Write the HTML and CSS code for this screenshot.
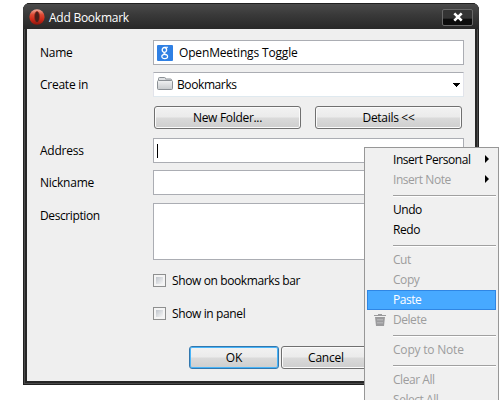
FILE: index.html
```html
<!DOCTYPE html>
<html lang="en">
<head>
<meta charset="utf-8">
<title>Add Bookmark</title>
<link rel="stylesheet" href="styles.css">
</head>
<body>
<main class="dialog">
  <header class="titlebar">
    <svg class="app-icon" width="16" height="16" viewBox="0 0 16 16">
      <defs>
        <linearGradient id="red" x1="0" y1="0" x2="0" y2="1"><stop offset="0" stop-color="#efb0a0"/><stop offset=".35" stop-color="#dc4a34"/><stop offset=".65" stop-color="#d02a1a"/><stop offset="1" stop-color="#8d150c"/></linearGradient>
      </defs>
      <ellipse cx="8" cy="8" rx="7.6" ry="7.8" fill="url(#red)"/>
      <ellipse cx="8" cy="8" rx="2.5" ry="5.6" fill="#47201b" stroke="#a02a1c" stroke-width=".7"/>
    </svg>
    <h1 class="title">Add Bookmark</h1>
    <button class="close" aria-label="Close">
      <svg width="12" height="10" viewBox="0 0 12 10"><path d="M2.3 1.3 9.7 8.7M9.7 1.3 2.3 8.7" stroke="#fff" stroke-width="2.6"/></svg>
    </button>
  </header>
  <form class="form">
    <div class="row"><label class="label">Name</label>
      <div class="field">
        <svg class="site-icon" width="16" height="16" viewBox="0 0 16 16"><rect width="16" height="16" rx="1" fill="#2f80e4"/><g fill="none" stroke="#fff"><ellipse cx="7.4" cy="4.9" rx="2.2" ry="2.4" stroke-width="1.3"/><path d="M7.8 2.2h3.2M7.4 7.4c-1.6 1 .6 1.4 1.8 2.4" stroke-width="1.1"/><ellipse cx="7.7" cy="11.5" rx="2.9" ry="2.1" stroke-width="1.2"/></g></svg>
        <span class="site-name">OpenMeetings Toggle</span>
      </div>
    </div>
    <div class="row"><label class="label">Create in</label>
      <div class="field combo">
        <svg class="folder" width="16" height="14" viewBox="0 0 16 14"><defs><linearGradient id="fold" x1="0" y1="0" x2="0" y2="1"><stop offset="0" stop-color="#f0f1f2"/><stop offset="1" stop-color="#c7cacd"/></linearGradient></defs><path d="M1.5 3V1.5q0-1 1-1h5q1 0 1 1V2h5q1 0 1 1v1" fill="#dfe1e3" stroke="#8b9095"/><rect x=".5" y="3.5" width="15" height="9" rx="1" fill="url(#fold)" stroke="#8b9095"/></svg>
        <span class="combo-text">Bookmarks</span>
        <svg class="arrow" width="7" height="4" viewBox="0 0 7 4" shape-rendering="crispEdges"><path d="M0 0h7v1H6v1H5v1H4v1H3V3H2V2H1V1H0z"/></svg>
      </div>
    </div>
    <div class="actions">
      <button class="btn wide" type="button">New Folder...</button>
      <button class="btn wide" type="button">Details &lt;&lt;</button>
    </div>
    <div class="row"><label class="label">Address</label><div class="field"><span class="caret"></span></div></div>
    <div class="row"><label class="label">Nickname</label><div class="field"></div></div>
    <div class="row tall"><label class="label tight">Description</label><div class="field area"></div></div>
    <div class="checks">
      <label class="check"><i class="box"></i><span>Show on bookmarks bar</span></label>
      <label class="check"><i class="box"></i><span>Show in panel</span></label>
    </div>
    <div class="footer">
      <button class="btn default" type="button">OK</button>
      <button class="btn cancel" type="button">Cancel</button>
    </div>
  </form>
</main>
<nav class="menu">
  <div class="item">Insert Personal<i class="sub"></i></div>
  <div class="item off">Insert Note<i class="sub"></i></div>
  <hr class="sep">
  <div class="item">Undo</div>
  <div class="item">Redo</div>
  <hr class="sep">
  <div class="item off">Cut</div>
  <div class="item off">Copy</div>
  <div class="item active">Paste</div>
  <div class="item off"><svg class="trash" width="12" height="12" viewBox="0 0 12 12"><path d="M0 1h4V0h4v1h4v1H0zM1 3h10l-1 9H2z" fill="#9b9b9d"/><path d="M4 5v1.5M6 5v1.5M8 5v1.5M4 8v1.5M6 8v1.5M8 8v1.5" stroke="#d0d0d2" stroke-width=".9"/></svg>Delete</div>
  <hr class="sep">
  <div class="item off loose">Copy to Note</div>
  <hr class="sep">
  <div class="item off">Clear All</div>
  <div class="item off">Select All</div>
</nav>
</body>
</html>
```
FILE: styles.css
```css
* { box-sizing: border-box; }
html, body { height: 400px; overflow: hidden; }
body {
  margin: 0;
  padding: 3px 0 0 23px;
  background: #fff;
  color: #000;
  font: 12px/16px "Open Sans", "Noto Sans", sans-serif;
}
svg { display: block; flex: none; }
button { font: inherit; color: inherit; }
.dialog {
  width: 456px;
  height: 382px;
  padding: 0 4px 4px;
  display: flex;
  flex-direction: column;
  border-radius: 7px 7px 0 0;
  background: #262626;
  box-shadow: inset 0 0 0 1px #202020, inset 0 0 0 2px #4a4a4a;
}
.titlebar {
  flex: none;
  display: flex;
  align-items: center;
  height: 26px;
  margin: 0 -4px;
  padding: 0 6px;
  border-radius: 7px 7px 0 0;
  background: linear-gradient(#202020 0 1px, #4a4a4a 1px, #393939 12px, #282828);
}
.app-icon { margin-top: 1px; }
.title {
  flex: 1;
  margin: 3px 0 0 4px;
  font-size: 12px;
  font-weight: 400;
  letter-spacing: -.25px;
  color: #fff;
}
.close {
  display: flex;
  align-items: center;
  justify-content: center;
  width: 31px;
  height: 17px;
  margin: 2px 0 0;
  padding: 0;
  border: 1px solid #686868;
  border-radius: 2px;
  background: linear-gradient(#343434 0 55%, #0c0c0c 60%);
}
.form { flex: 1; padding: 11px 11px 0 13px; background: #efefef; }
.row { display: flex; height: 25px; margin-bottom: 7px; }
.label { width: 113px; padding-top: 5px; letter-spacing: -.25px; }
.tight { letter-spacing: -.4px; }
.field {
  flex: 1;
  display: flex;
  align-items: center;
  padding: 0 3px;
  border: 1px solid #abadb3;
  background: #fff;
}
.site-name { margin-left: 6px; letter-spacing: -.16px; }
.combo { border-color: #abadb3 #e2e3ea #dfe9ef; }
.folder { margin-top: -2px; }
.combo-text { flex: 1; margin-left: 4px; letter-spacing: -.4px; }
.actions {
  display: flex;
  gap: 14px;
  margin: 9px 0 9px 114px;
}
.btn {
  width: 90px;
  height: 23px;
  padding: 0;
  border: 1px solid #707070;
  border-radius: 3px;
  background: linear-gradient(#f2f2f2, #ebebeb 48%, #dadada 52%, #cecece);
  box-shadow: inset 0 0 0 1px #fbfbfb;
}
.wide { width: 147px; letter-spacing: -.3px; }
.default { border-color: #3277ae; box-shadow: inset 0 0 0 1px #48b4f8; }
.cancel { letter-spacing: -.2px; }
.caret { width: 1px; height: 14px; background: #000; }
.tall { height: 57px; margin: 8px 0 12px; }
.checks { margin-left: 113px; }
.check { display: flex; align-items: center; height: 17px; margin-bottom: 16px; letter-spacing: -.38px; }
.box {
  width: 13px;
  height: 13px;
  margin-right: 6px;
  padding: 2px;
  border: 1px solid #8e8f8f;
  background: linear-gradient(135deg, #bfc4cb, #f6f6f6) content-box, #f4f4f4;
}
.footer { display: flex; gap: 2px; margin: 24px 0 0 149px; }
.menu {
  position: absolute;
  left: 364px;
  top: 147px;
  width: 135px;
  height: 270px;
  padding: 2px;
  border: 1px solid #979797;
  background: #f0f0f0;
}
.item {
  position: relative;
  display: flex;
  align-items: center;
  height: 20px;
  padding-left: 26px;
  letter-spacing: -.45px;
}
.loose { letter-spacing: -.2px; }
.off { color: #9d9d9d; }
.active {
  padding-left: 25px;
  border: 1px solid #2f86e4;
  background: #47a9ff;
  color: #fff;
}
.sep {
  height: 2px;
  margin: 5px 0 3px 26px;
  border: 0;
  background: linear-gradient(#a0a0a0 50%, #fff 50%);
}
.sub {
  margin: -2px 7px 0 auto;
  border: 4px solid transparent;
  border-left-color: #000;
  border-right: 0;
}
.trash { position: absolute; left: 7px; top: 4px; }
```
